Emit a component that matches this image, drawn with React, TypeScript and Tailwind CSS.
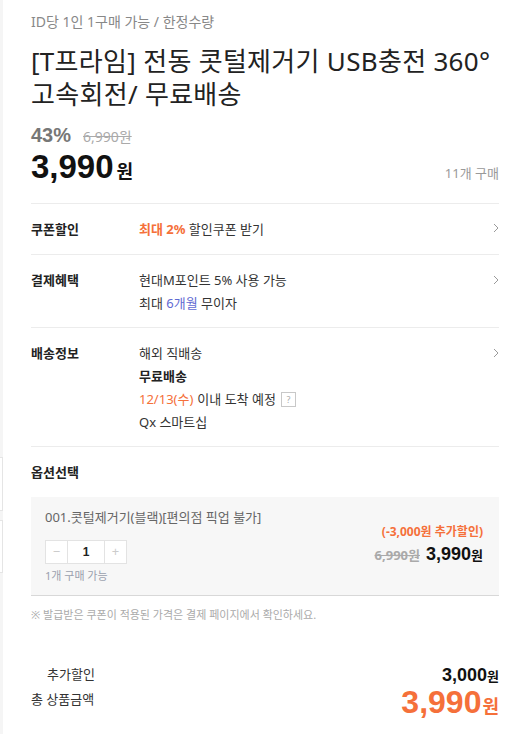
const kr = "font-['Noto_Sans','Noto_Sans_CJK_KR',sans-serif]";
const num = "font-['Liberation_Sans','Noto_Sans_CJK_KR',sans-serif]";

function Chevron() {
  return (
    <svg width="6" height="10" viewBox="0 0 6 10" className="shrink-0">
      <path d="M1 1l4 4-4 4" fill="none" stroke="#9a9a9a" strokeWidth="1" />
    </svg>
  );
}

export default function App() {
  return (
    <div className={`flex min-h-[734px] w-[521px] bg-white ${kr}`}>
      {/* left thumbnail column edge */}
      <div className="flex w-[3px] shrink-0 flex-col bg-[#f5f5f5]">
        <div className="h-[457px]" />
        <div className="h-[54px] border-y border-r border-[#e5e5e5] bg-white" />
        <div className="h-[9px]" />
        <div className="h-[53px] border-y border-r border-[#e5e5e5] bg-white" />
      </div>
      <div className="w-[7px] shrink-0" />

      <div className="ml-[21px] flex w-[468px] flex-col">
        <div className="pt-[11px] text-[14px] leading-[22px] text-[#888]">ID당 1인 1구매 가능 / 한정수량</div>
        <h1 className="mt-[12px] text-[26px] leading-[33px] tracking-[0.3px] text-[#222]">
          [T프라임] 전동 콧털제거기 USB충전 360° 고속회전/ 무료배송
        </h1>

        <div className="mt-[9px] flex items-baseline gap-[12px]">
          <span className={`text-[20px] font-bold text-[#777] ${num}`}>43%</span>
          <span className="text-[14px] text-[#aaa] line-through">6,990원</span>
        </div>
        <div className="-mt-[1px] flex items-baseline justify-between">
          <div className="flex items-baseline">
            <span className={`text-[33px] font-bold leading-[36px] text-[#111] ${num}`}>3,990</span>
            <span className="ml-[3px] text-[18px] font-bold text-[#111]">원</span>
          </div>
          <span className="text-[13px] text-[#999]">11개 구매</span>
        </div>

        <div className="mt-[18px] border-t border-[#ececec]" />

        <div className="flex border-b border-[#ececec] py-[15px] leading-[20px]">
          <div className="w-[108px] shrink-0 text-[13px] font-bold text-[#222]">쿠폰할인</div>
          <div className="flex-1 text-[13px] text-[#333]">
            <span className="font-bold text-[#f5703a]">최대 2%</span> 할인쿠폰 받기
          </div>
          <div className="pt-[4px]"><Chevron /></div>
        </div>

        <div className="flex border-b border-[#ececec] pt-[14px] pb-[12px] leading-[23px]">
          <div className="w-[108px] shrink-0 text-[13px] font-bold text-[#222]">결제혜택</div>
          <div className="flex-1 text-[13px] text-[#333]">
            <div>현대M포인트 5% 사용 가능</div>
            <div>
              최대 <span className="text-[#5e6ad2]">6개월</span> 무이자
            </div>
          </div>
          <div className="pt-[6px]"><Chevron /></div>
        </div>

        <div className="flex border-b border-[#ececec] pt-[14px] pb-[12px] leading-[23px]">
          <div className="w-[108px] shrink-0 text-[13px] font-bold text-[#222]">배송정보</div>
          <div className="flex-1 text-[13px] text-[#333]">
            <div>해외 직배송</div>
            <div className="font-bold text-[#222]">무료배송</div>
            <div className="flex items-center">
              <span className="text-[#f5703a]">12/13(수)</span>
              <span className="ml-[4px]">이내 도착 예정</span>
              <span className="ml-[5px] flex h-[15px] w-[15px] items-center justify-center border border-[#c8c8c8] text-[9px] leading-none text-[#aaa]">?</span>
            </div>
            <div>Qx 스마트십</div>
          </div>
          <div className="pt-[6px]"><Chevron /></div>
        </div>

        <div className="pt-[14px] text-[13px] font-bold leading-[22px] text-[#222]">옵션선택</div>

        <div className="mt-[14px] flex justify-between border-b border-[#d8d8d8] bg-[#f7f7f7] pt-[10px] pb-[11px] pl-[14px] pr-[16px]">
          <div className="flex flex-col">
            <div className="text-[13px] leading-[20px] text-[#666]">001.콧털제거기(블랙)[편의점 픽업 불가]</div>
            <div className="mt-[13px] flex h-[24px] w-[82px] border border-[#e3e3e3] bg-white">
              <div className="flex w-[22px] items-center justify-center border-r border-[#e3e3e3] text-[13px] text-[#ccc]">−</div>
              <div className={`flex flex-1 items-center justify-center text-[12px] font-bold text-[#222] ${num}`}>1</div>
              <div className="flex w-[22px] items-center justify-center border-l border-[#e3e3e3] text-[13px] text-[#ccc]">+</div>
            </div>
            <div className="mt-[4px] text-[11px] leading-[16px] text-[#9aa0ad]">1개 구매 가능</div>
          </div>
          <div className="flex flex-col items-end pt-[16px]">
            <div className="text-[12px] font-bold leading-[18px] text-[#f5703a]">(-3,000원 추가할인)</div>
            <div className="flex items-baseline">
              <span className="text-[13px] font-bold text-[#aaa] line-through">6,990원</span>
              <span className={`ml-[6px] text-[18px] font-bold text-[#111] ${num}`}>3,990</span>
              <span className="text-[13px] font-bold text-[#111]">원</span>
            </div>
          </div>
        </div>

        <div className="mt-[10px] text-[11px] leading-[18px] text-[#aaa]">※ 발급받은 쿠폰이 적용된 가격은 결제 페이지에서 확인하세요.</div>

        <div className="mt-[41px] flex h-[20px] items-center justify-between">
          <span className="pl-[16px] text-[13px] text-[#333]">추가할인</span>
          <span className="flex items-baseline">
            <span className={`text-[18px] font-bold text-[#111] ${num}`}>3,000</span>
            <span className="text-[13px] font-bold text-[#111]">원</span>
          </span>
        </div>
        <div className="flex h-[34px] items-center justify-between">
          <span className="-mt-[4px] text-[13px] text-[#333]">총 상품금액</span>
          <span className="flex items-baseline">
            <span className={`text-[32px] font-bold leading-[36px] text-[#f5703a] ${num}`}>3,990</span>
            <span className="ml-[1px] text-[18px] font-bold text-[#f5703a]">원</span>
          </span>
        </div>
      </div>
    </div>
  );
}
